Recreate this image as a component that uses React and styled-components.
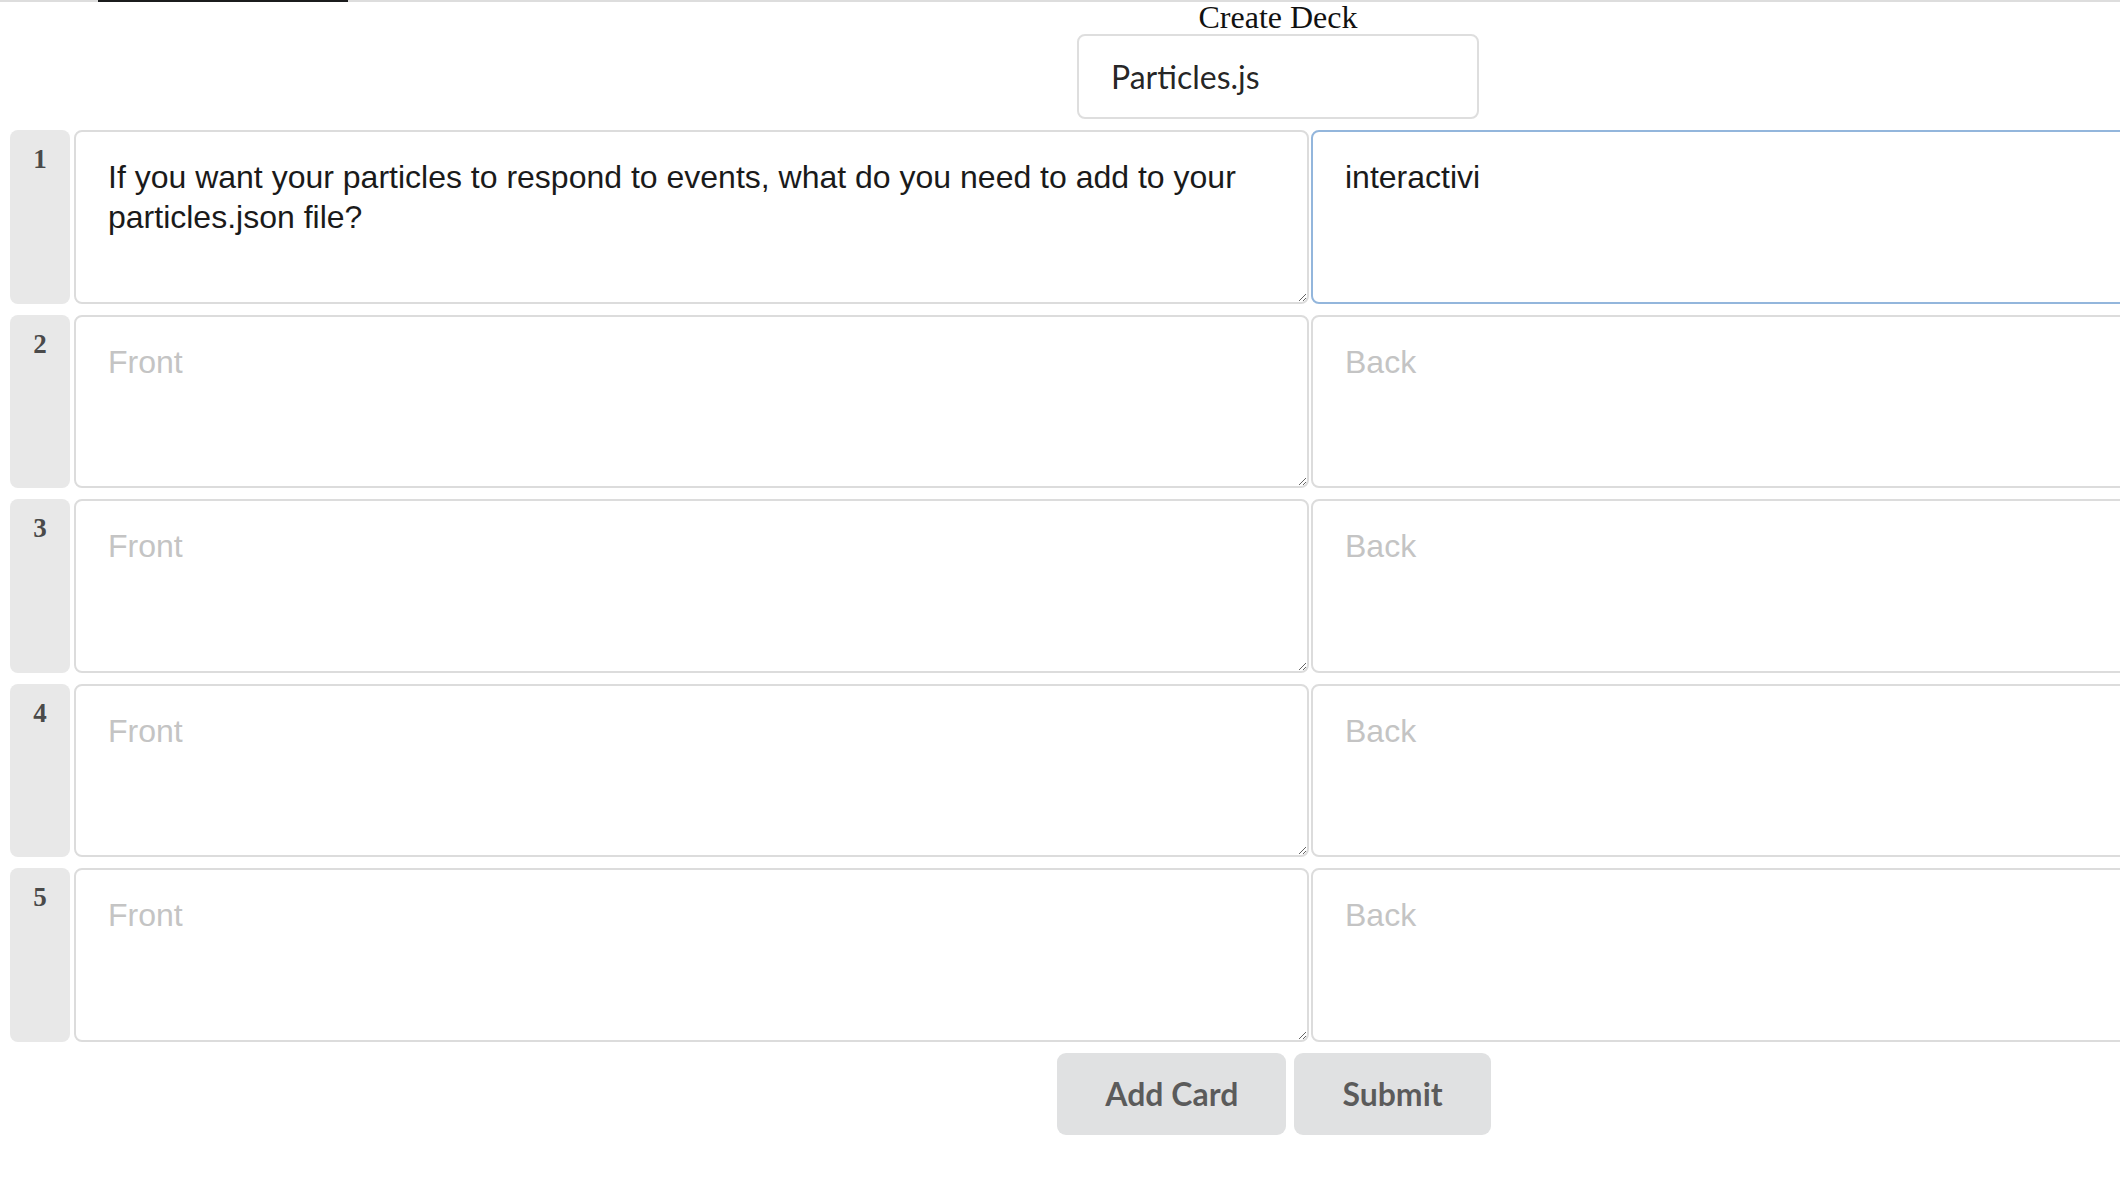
import React, { useEffect, useRef } from "react";
import styled, { createGlobalStyle } from "styled-components";

const GlobalStyle = createGlobalStyle`
  html, body {
    margin: 0;
    padding: 0;
    background: #ffffff;
    overflow: hidden;
  }
  * { box-sizing: border-box; }
`;

const TopBar = styled.div`
  height: 2px;
  width: 100%;
  background: #dddddd;
  display: flex;
`;

const ActiveTab = styled.div`
  margin-left: 98px;
  width: 250px;
  height: 2px;
  background: #1b1c1d;
`;

const Page = styled.div`
  width: 2556px;
  padding: 0 8px;
`;

const Title = styled.h2`
  margin: 0;
  text-align: center;
  font-family: "Liberation Serif", "Times New Roman", serif;
  font-weight: normal;
  font-size: 32px;
  line-height: 31px;
  color: #111111;
`;

const TitleRow = styled.div`
  display: flex;
  justify-content: center;
  margin-top: 1px;
`;

const DeckInput = styled.input`
  width: 402px;
  height: 85px;
  padding: 0 32px;
  border: 2px solid #dedede;
  border-radius: 8px;
  font-family: Lato, "Open Sans", sans-serif;
  font-size: 32px;
  color: rgba(0, 0, 0, 0.87);
  background: #ffffff;
  outline: none;
`;

const Cards = styled.div`
  display: flex;
  flex-direction: column;
  gap: 11px;
  margin-top: 11px;
`;

const CardRow = styled.div`
  display: flex;
  height: 173.5px;
  padding-left: 2px;
`;

const NumberCell = styled.div`
  flex: 0 0 60px;
  margin-right: 4px;
  background: #e8e8e8;
  border-radius: 8px;
  padding-top: 14px;
  text-align: center;
  font-family: "Liberation Serif", "Times New Roman", serif;
  font-weight: bold;
  font-size: 27px;
  line-height: 31px;
  color: #4a4a4a;
`;

const CardText = styled.textarea`
  flex: 0 0 1235px;
  width: 1235px;
  height: 173.5px;
  margin: 0 ${(p) => (p.$side === "front" ? "2px" : "0")} 0 0;
  padding: 25px 32px;
  border: 2px solid #dcdcdc;
  border-radius: 8px;
  font-family: "Liberation Sans", Arial, Helvetica, sans-serif;
  font-size: 32px;
  line-height: 40px;
  color: #1a1a1a;
  background: #ffffff;
  resize: vertical;
  outline: none;

  &::placeholder {
    color: #c4c4c4;
  }

  &:focus {
    border-color: #93b6dc;
  }
`;

const ButtonBar = styled.div`
  margin-top: 11px;
  text-align: center;
  font-size: 0;
`;

const Button = styled.button`
  display: inline-block;
  margin: 0 8px 0 0;
  padding: 25px 48px;
  border: none;
  border-radius: 9px;
  background: #e0e1e2;
  color: rgba(0, 0, 0, 0.6);
  font-family: Lato, "Open Sans", sans-serif;
  font-weight: bold;
  font-size: 32px;
  line-height: 32px;
  cursor: pointer;
`;

const cards = [
  {
    front:
      "If you want your particles to respond to events, what do you need to add to your particles.json file?",
    back: "interactivi",
  },
  { front: "", back: "" },
  { front: "", back: "" },
  { front: "", back: "" },
  { front: "", back: "" },
];

export default function App() {
  const backRef = useRef(null);

  useEffect(() => {
    const el = backRef.current;
    if (el) {
      el.focus();
      const end = el.value.length;
      el.setSelectionRange(end, end);
    }
  }, []);

  return (
    <>
      <GlobalStyle />
      <TopBar>
        <ActiveTab />
      </TopBar>
      <Page>
        <Title>Create Deck</Title>
        <TitleRow>
          <DeckInput defaultValue="Particles.js" placeholder="Deck Title" />
        </TitleRow>
        <Cards>
          {cards.map((c, i) => (
            <CardRow key={i}>
              <NumberCell>{i + 1}</NumberCell>
              <CardText
                $side="front"
                placeholder="Front"
                defaultValue={c.front}
                spellCheck={true}
              />
              <CardText
                $side="back"
                placeholder="Back"
                defaultValue={c.back}
                ref={i === 0 ? backRef : undefined}
              />
            </CardRow>
          ))}
        </Cards>
        <ButtonBar>
          <Button type="button">Add Card</Button>
          <Button type="button">Submit</Button>
        </ButtonBar>
      </Page>
    </>
  );
}
